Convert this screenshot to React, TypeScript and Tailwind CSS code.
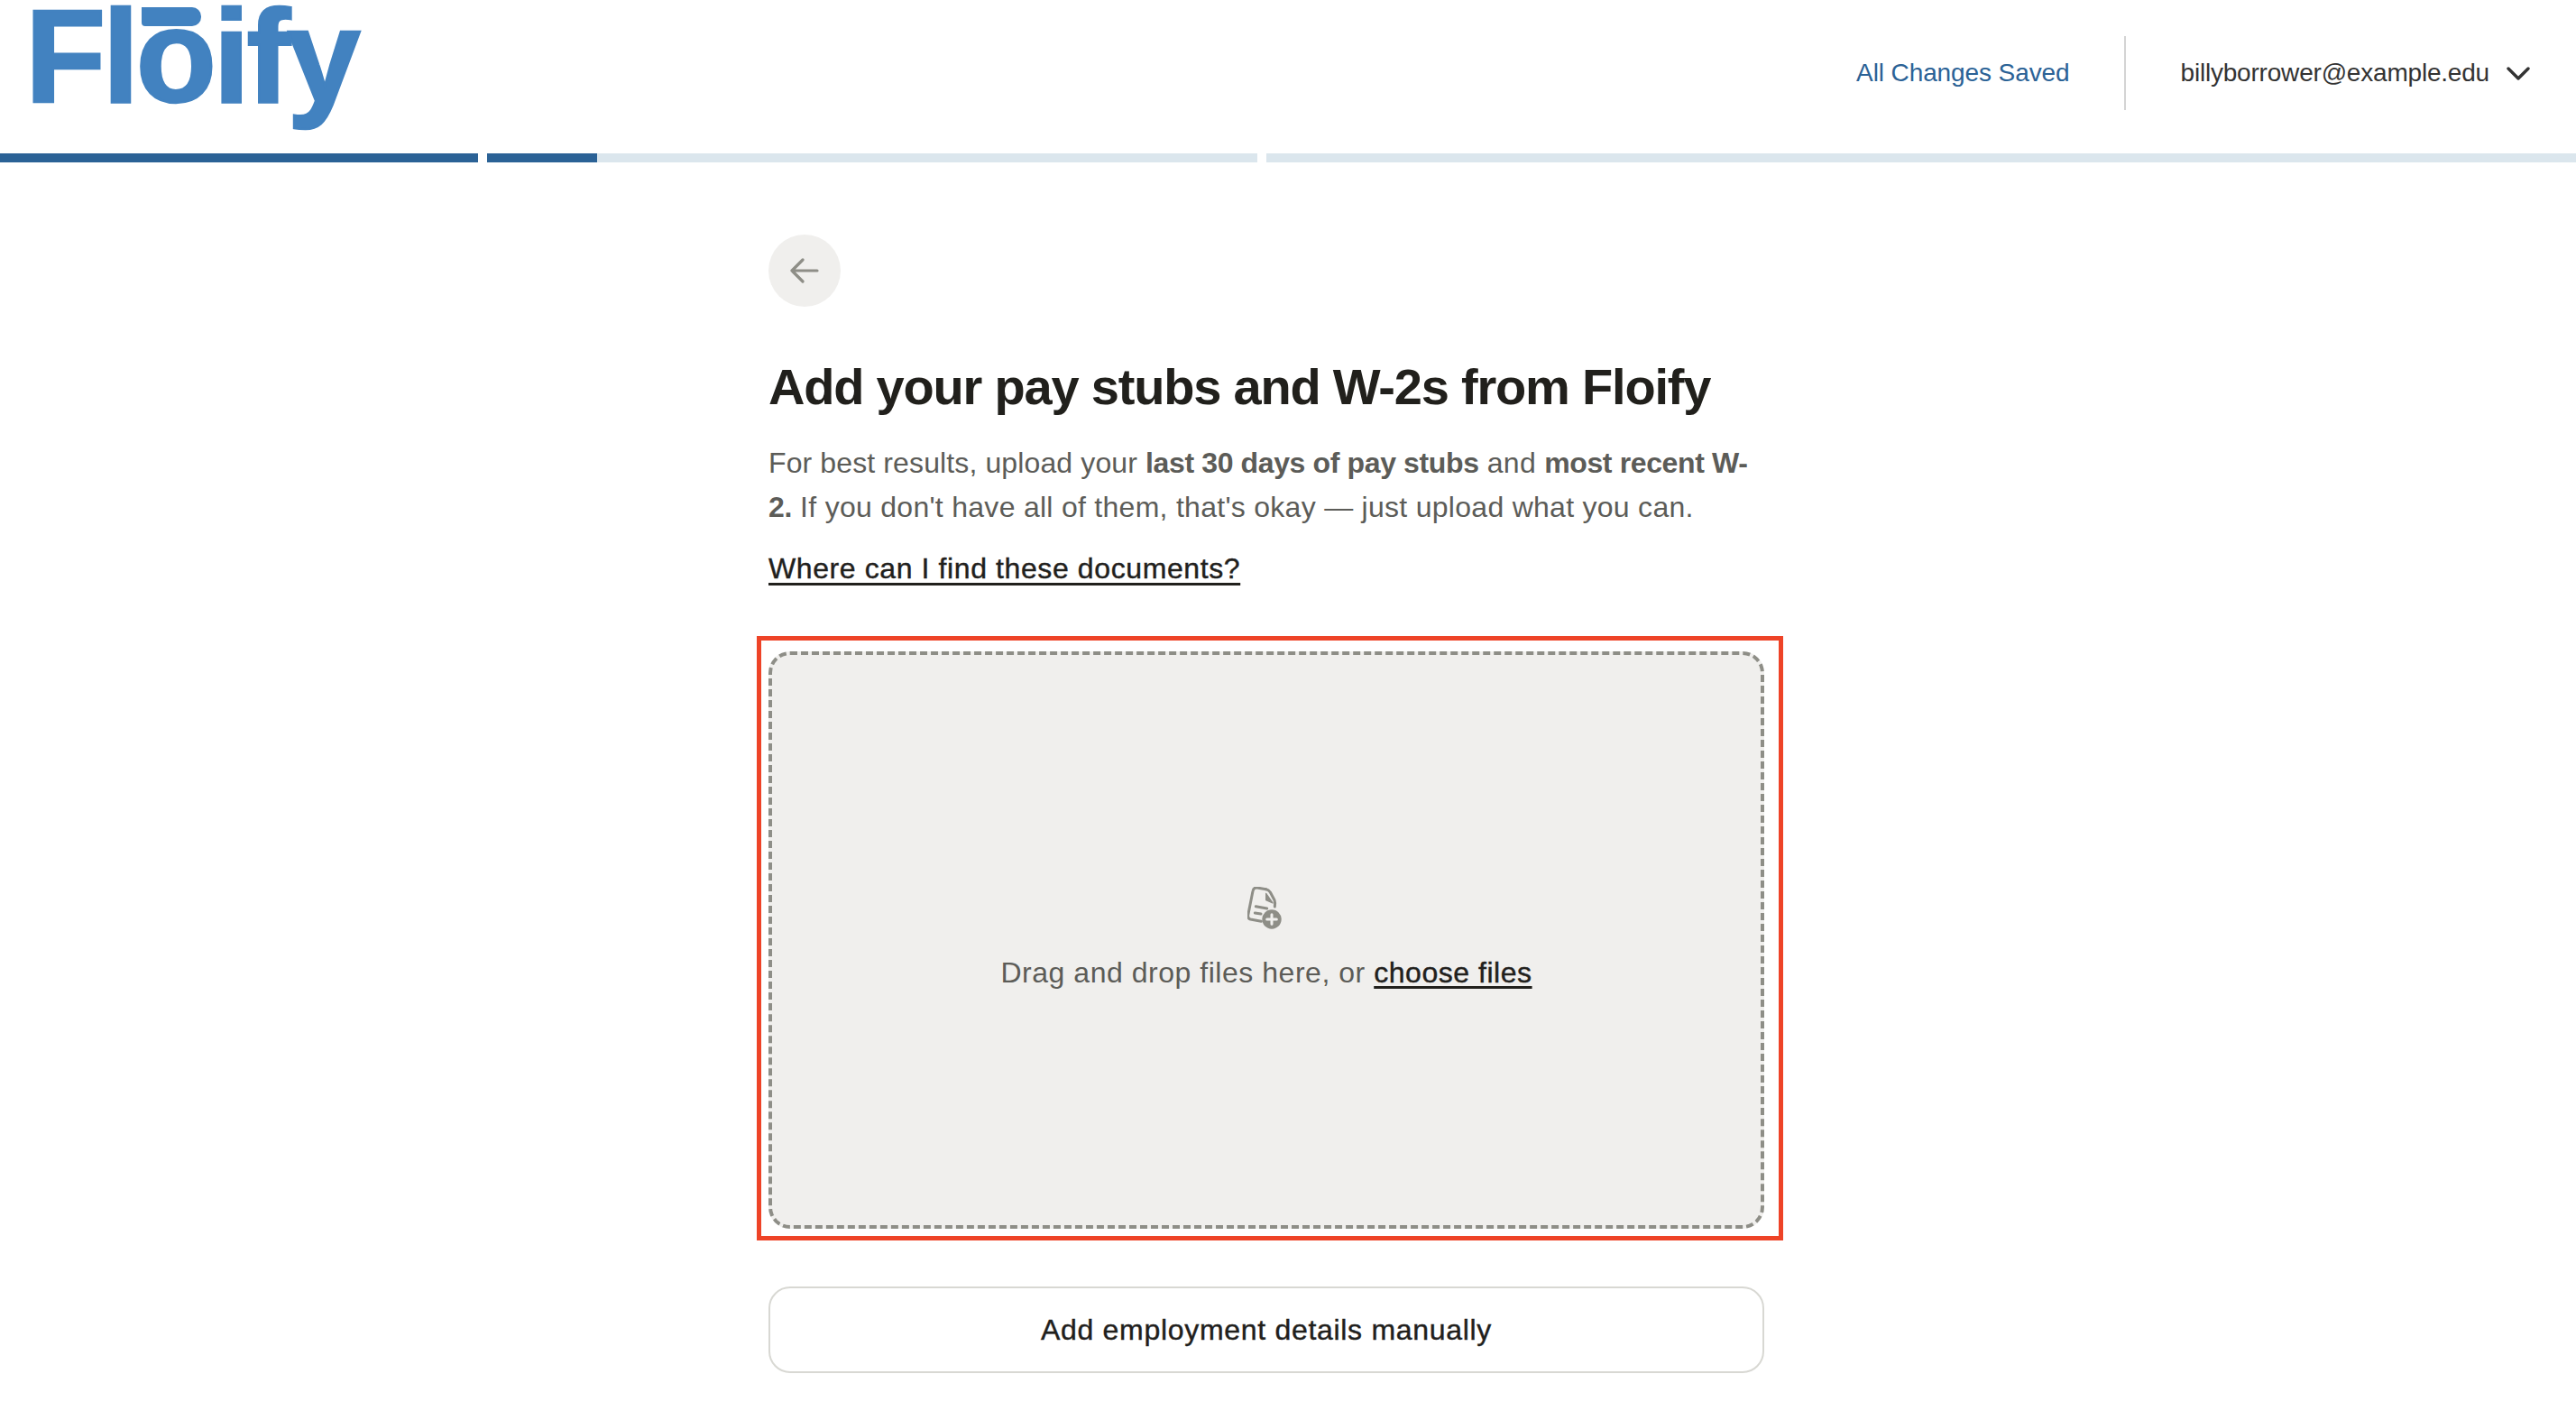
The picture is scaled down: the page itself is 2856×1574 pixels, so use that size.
export default function App() {
  return (
    <div className="min-h-[1574px] bg-white font-['Liberation_Sans',sans-serif] overflow-hidden">
      <header className="h-[170px] flex items-center pl-[28px] pr-[51px] pb-[8px]">
        <div className="relative self-start h-[160px] w-[380px] pt-[3px] font-bold text-[146px] leading-[120px] tracking-[-3.5px] text-[#4282c0] [-webkit-text-stroke:2.5px_#4282c0]">
          <span className="block">Floify</span>
          <span className="absolute left-[129px] top-[8px] h-[21px] w-[66px] rounded-bl-[4px] rounded-r-[10px] bg-[#4282c0]"></span>
        </div>
        <span className="ml-auto text-[28px] tracking-[-0.1px] text-[#2b6296] leading-none">All Changes Saved</span>
        <span className="ml-[60px] h-[82px] w-[2px] bg-[#d4d4d4]"></span>
        <span className="ml-[61px] text-[28px] tracking-[-0.2px] text-[#333333] leading-none">billyborrower@example.edu</span>
        <svg className="ml-[19px]" width="26" height="15" viewBox="0 0 26 15" fill="none" stroke="#333333" strokeWidth="3.4" strokeLinecap="round" strokeLinejoin="round">
          <path d="M2 2 L13 13 L24 2" />
        </svg>
      </header>
      <div className="flex gap-[10px] h-[10px]">
        <div className="w-[530px] bg-[#2b6296]"></div>
        <div className="w-[854px] bg-[#dbe6ed]">
          <div className="w-[122px] h-full bg-[#2b6296]"></div>
        </div>
        <div className="flex-1 bg-[#dbe6ed]"></div>
      </div>
      <main className="ml-[852px] w-[1104px] pt-[80px]">
        <button className="w-[80px] h-[80px] rounded-full bg-[#f0efed] flex items-center justify-center">
          <svg width="32" height="28" viewBox="0 0 32 28" fill="none" stroke="#8e8e87" strokeWidth="3.2" strokeLinecap="round" strokeLinejoin="round">
            <path d="M30 14 H2 M14 2 L2 14 L14 26" />
          </svg>
        </button>
        <h1 className="mt-[53px] text-[56px] leading-[72px] font-bold text-[#21201c] tracking-[-1.2px]">
          Add your pay stubs and W-2s from Floify
        </h1>
        <p className="mt-[24px] text-[32px] leading-[49px] tracking-[0.28px] text-[#5c5c58]">
          <span className="tracking-[0.12px]">For best results, upload your </span><b className="font-bold tracking-[-0.37px]">last 30 days of pay stubs</b> and <b className="font-bold tracking-[-0.37px]">most recent W-2.</b> If you don't have all of them, that's okay — just upload what you can.
        </p>
        <a className="block mt-[19px] text-[32px] leading-[49px] tracking-[0.6px] text-[#21201c] [-webkit-text-stroke:0.4px_#21201c] underline decoration-[3px] underline-offset-[5px]">
          Where can I find these documents?
        </a>
        <div className="-ml-[13px] mt-[50px] w-[1138px] h-[670px] border-[5px] border-[#ee4327] pt-[12px] pl-[8px]">
          <div className="w-[1104px] h-[640px] bg-[#f0efed] border-4 border-dashed border-[#8e8e87] rounded-[24px] flex flex-col items-center justify-center">
            <svg className="-ml-[4px]" width="38" height="47" viewBox="0 0 114 141" fill="none" stroke="#8e8e87" strokeWidth="9" strokeLinecap="round" strokeLinejoin="round">
              <path d="M62 8 L32 3 Q20 2 18 14 L2 95 Q1 105 10 108 L46 115" />
              <path d="M62 8 Q70 9 76 18 L90 44 Q93 52 91 66" />
              <path d="M62 22 L62 44 L84 54 Z" fill="#8e8e87" strokeWidth="4" />
              <path d="M28 65 L65 72 M25 87 L45 90" />
              <circle cx="81" cy="108" r="32" fill="#8e8e87" stroke="none" />
              <path d="M81 92 V124 M65 108 H97" stroke="#f0efed" />
            </svg>
            <p className="mt-[24px] text-[32px] leading-[48px] tracking-[0.53px] text-[#5c5c58]">
              Drag and drop files here, or <a className="text-[#21201c] [-webkit-text-stroke:0.4px_#21201c] underline decoration-[3px] underline-offset-[4px]">choose files</a>
            </p>
          </div>
        </div>
        <button className="mt-[51px] w-[1104px] h-[96px] rounded-[24px] border-2 border-[#d8d8d3] bg-white text-[32px] tracking-[0.7px] [-webkit-text-stroke:0.4px_#21201c] text-[#21201c]">
          Add employment details manually
        </button>
      </main>
    </div>
  );
}
